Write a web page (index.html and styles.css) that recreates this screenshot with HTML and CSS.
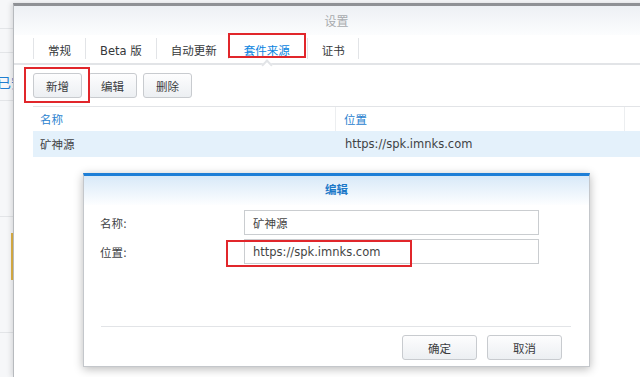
FILE: index.html
```html
<!DOCTYPE html>
<html lang="zh-CN">
<head>
  <meta charset="UTF-8">
  <meta name="viewport" content="width=device-width, initial-scale=1.0">
  <title>设置 - 套件来源</title>
  <link rel="stylesheet" href="styles.css">
</head>
<body>
  <div class="screen">
    <aside class="bg-app">
      <div class="bg-row r1"></div>
      <div class="bg-row r2"></div>
      <div class="bg-row r3"><span class="bg-text">已安装</span></div>
      <div class="bg-row r4"></div>
      <div class="bg-row r5"><span class="bg-flag"></span></div>
      <div class="bg-row r6"></div>
    </aside>

    <section class="window">
      <header class="win-title">设置</header>

      <nav class="tabs">
        <span class="tab">常规</span>
        <span class="tab">Beta 版</span>
        <span class="tab narrow">自动更新</span>
        <span class="tab active">套件来源<i class="notch"></i></span>
        <span class="tab">证书</span>
      </nav>

      <div class="toolbar">
        <button class="btn">新增</button>
        <button class="btn">编辑</button>
        <button class="btn">删除</button>
      </div>

      <div class="grid">
        <div class="grid-head">
          <div class="cell c-name">名称</div>
          <div class="cell c-loc">位置</div>
          <div class="cell c-rest"></div>
        </div>
        <div class="grid-row selected">
          <div class="cell c-name">矿神源</div>
          <div class="cell c-loc">https://spk.imnks.com</div>
          <div class="cell c-rest"></div>
        </div>
      </div>

      <div class="dialog">
        <div class="dialog-title">编辑</div>
        <div class="dialog-body">
          <div class="field">
            <label class="field-label">名称:</label>
            <div class="input">矿神源</div>
          </div>
          <div class="field">
            <label class="field-label">位置:</label>
            <div class="input">https://spk.imnks.com</div>
          </div>
        </div>
        <div class="dialog-foot">
          <button class="btn wide">确定</button>
          <button class="btn wide">取消</button>
        </div>
      </div>
    </section>

    <!-- red annotation boxes -->
    <div class="mark mark-tab"></div>
    <div class="mark mark-add"></div>
    <div class="mark mark-url"></div>
  </div>
</body>
</html>
```

FILE: styles.css
```css
:root {
  --text: #404245;
  --blue: #1f7fd1;
  --line: #e2e4e7;
  --border: #c8cbcf;
  --red: #e1262b;
}

* {
  margin: 0;
  padding: 0;
  box-sizing: border-box;
}

body {
  font-family: "DejaVu Sans", "Noto Sans CJK SC", sans-serif;
  font-size: 11.5px;
  color: var(--text);
  background: #fff;
  overflow: hidden;
}

.screen {
  position: relative;
  display: flex;
  width: 640px;
  height: 377px;
  overflow: hidden;
  background: #f6f7f9;
}

/* background application peeking on the left */
.bg-app {
  width: 13px;
  flex-shrink: 0;
  overflow: hidden;
  display: flex;
  flex-direction: column;
}

.bg-row {
  border-bottom: 1px solid #e3e5e8;
  position: relative;
}

.r1 { height: 29px; }
.r2 { height: 24px; }
.r3 { height: 48px; padding-top: 19px; }
.r4 { height: 116px; }
.r5 { height: 116px; }
.r6 { flex: 1; border-bottom: none; }

.bg-text {
  display: block;
  width: 60px;
  margin-left: -3px;
  font-size: 14px;
  color: var(--blue);
  white-space: nowrap;
}

.bg-flag {
  position: absolute;
  right: 0;
  top: 16px;
  width: 2px;
  height: 47px;
  background: #e2b548;
}

/* settings window */
.window {
  position: relative;
  flex-shrink: 0;
  width: 646px;
  margin-top: 3px;
  border-top: 3px solid #8f9195;
  border-left: 1px solid #b7babe;
  background: #fff;
  box-shadow: -2px 0 5px rgba(0, 0, 0, 0.12);
}

.win-title {
  height: 29px;
  padding-top: 2px;
  line-height: 29px;
  text-align: center;
  font-size: 12px;
  color: #a8abae;
  background: linear-gradient(#edf0f4, #fcfdfe);
}

.tabs {
  display: flex;
  align-items: center;
  height: 30px;
  padding-left: 19px;
  border-bottom: 2px solid var(--line);
}

.tab {
  position: relative;
  height: 100%;
  padding: 1px 14px 0 15px;
  display: flex;
  align-items: center;
  color: #35373a;
}

.tab.narrow {
  padding-right: 11px;
}

.tab::before {
  content: "";
  position: absolute;
  left: 0;
  top: 3px;
  bottom: 4px;
  border-left: 1px solid var(--line);
}

.tab:last-child::after {
  content: "";
  position: absolute;
  right: 0;
  top: 3px;
  bottom: 4px;
  border-right: 1px solid var(--line);
}

.tab.active {
  color: #0a84e0;
  padding: 1px 17px 0 16px;
}

.notch {
  position: absolute;
  left: 50%;
  bottom: -6px;
  width: 8px;
  height: 8px;
  margin-left: -4px;
  background: #fff;
  border-top: 2px solid var(--line);
  border-left: 2px solid var(--line);
  transform: rotate(45deg);
}

.toolbar {
  display: flex;
  gap: 6px;
  margin-left: 19px;
  padding: 8px 0 8px;
  border-bottom: 1px solid var(--line);
}

.btn {
  height: 25px;
  padding: 0 12px;
  font-family: inherit;
  font-size: 11.5px;
  color: #3a3c3f;
  background: linear-gradient(#fdfdfe, #eceff2);
  border: 1px solid var(--border);
  border-radius: 3px;
}

.btn.wide {
  width: 75px;
}

/* grid */
.grid {
  margin-left: 19px;
}

.grid-head,
.grid-row {
  display: flex;
}

.grid-head {
  height: 24px;
  color: #2a82cf;
}

.grid-row {
  height: 26px;
}

.grid-row.selected {
  background: #e4f1fb;
}

.cell {
  display: flex;
  align-items: center;
  white-space: nowrap;
}

.c-name {
  width: 303px;
  padding-left: 7px;
}

.c-loc {
  width: 289px;
  padding-left: 8px;
}

.grid-head .c-name,
.grid-head .c-loc {
  border-right: 1px solid #eceef0;
}

.grid-row .c-name {
  width: 304px;
}

.c-rest {
  flex: 1;
}

/* edit dialog */
.dialog {
  position: absolute;
  left: 69px;
  top: 167px;
  width: 507px;
  height: 194px;
  display: flex;
  flex-direction: column;
  background: #fff;
  border: 1px solid #c4c7cb;
  border-top: 3px solid #1e7fd7;
  box-shadow: 0 2px 9px rgba(0, 0, 0, 0.28);
}

.dialog-title {
  height: 29px;
  line-height: 29px;
  text-align: center;
  font-weight: bold;
  color: #1b78c8;
  background: linear-gradient(#d8e9f8, #fdfeff);
}

.dialog-body {
  flex: 1;
  display: flex;
  flex-direction: column;
  gap: 4px;
  padding: 5px 18px 0 16px;
}

.field {
  display: flex;
  align-items: center;
  height: 25px;
}

.field-label {
  width: 144px;
}

.input {
  width: 295px;
  height: 25px;
  padding-left: 8px;
  display: flex;
  align-items: center;
  border: 1px solid #cacdd0;
  color: #444;
}

.dialog-foot {
  display: flex;
  justify-content: flex-end;
  gap: 10px;
  margin: 0 18px 0 17px;
  padding: 8px 9px 6px 0;
  border-top: 1px solid var(--line);
}

/* red annotation boxes */
.mark {
  position: absolute;
  border: 2px solid var(--red);
  z-index: 5;
}

.mark-tab { left: 228px; top: 33px; width: 78px; height: 25px; }
.mark-add { left: 24px; top: 67px; width: 66px; height: 36px; }
.mark-url { left: 226px; top: 240px; width: 186px; height: 27px; }
```
